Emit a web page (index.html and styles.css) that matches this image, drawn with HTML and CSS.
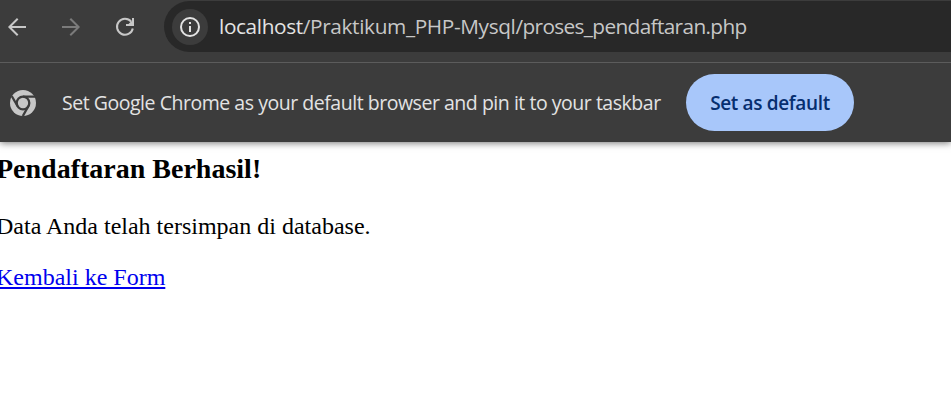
FILE: index.html
```html
<!DOCTYPE html>
<html lang="id">
<head>
<meta charset="utf-8">
<title>Pendaftaran</title>
<link rel="stylesheet" href="styles.css">
</head>
<body>
<header class="browser">
  <div class="toolbar">
    <svg class="nav" viewBox="0 0 164 54" fill="none" stroke="#c7c7c7" stroke-width="2">
      <path d="M26 27H9.5M17.7 18.7 9.4 27l8.3 8.3"/>
      <path stroke="#7b7b7b" d="M62 27h16.500M70.300 18.700l8.300 8.300-8.300 8.300"/>
      <path d="M131.200 21.700A8 8 0 1 0 132.800 28.500M133 18v7h-7"/>
      <path d="M131 21.500l-3.500 3.500h5v-4z" fill="#c7c7c7" stroke="none"/>
    </svg>
    <div class="address">
      <span class="site-info">
        <svg viewBox="0 0 22 22" fill="none" stroke="#e3e3e3" stroke-width="2"><circle cx="11" cy="11" r="9"/><path d="M11 10v6M11 6v2"/></svg>
      </span>
      <span class="url"><span class="host">localhost</span><span class="dir">/Praktikum_PHP-Mysql</span>/proses_pendaftaran.php</span>
    </div>
  </div>
  <div class="infobar">
    <svg class="chrome" viewBox="0 0 26 26"><circle cx="13" cy="13" r="13" fill="#c7c7c7"/><g fill="none" stroke="#3c3c3c" stroke-width="2.300"><circle cx="13" cy="13" r="6.300"/><path d="M13 6.700H25M7.500 16 1.700 6M18.500 16l-5.700 10"/></g></svg>
    <span class="message">Set Google Chrome as your default browser and pin it to your taskbar</span>
    <button class="default">Set as default</button>
  </div>
</header>
<main class="page">
  <h3>Pendaftaran Berhasil!</h3>
  <p>Data Anda telah tersimpan di database.</p>
  <a href="#">Kembali ke Form</a>
</main>
</body>
</html>
```
FILE: styles.css
```css
* { box-sizing: border-box; }
body { margin: 0; background: #fff; overflow: hidden; }
.browser {
  height: 142px;
  background: #3c3c3c;
  color: #e3e3e3;
  font-family: "Open Sans", sans-serif;
  box-shadow: 0 1px 7px rgba(0, 0, 0, .55);
}
.toolbar { display: flex; height: 63px; padding-top: 1px; border-bottom: 1px solid #5c5c5c; }
.nav { width: 164px; height: 54px; margin-top: -1px; flex: none; }
.address {
  display: flex;
  align-items: center;
  flex: 1;
  height: 51px;
  padding-left: 8px;
  border-radius: 26px 0 0 26px;
  background: #282828;
}
.site-info { display: grid; place-items: center; width: 36px; height: 36px; border-radius: 50%; background: #3c3c3c; }
.site-info svg { width: 22px; height: 22px; }
.url { margin: 0 0 2px 11px; color: #c7c7c7; font-size: 20.800px; letter-spacing: -.64px; white-space: nowrap; }
.host { color: #e3e3e3; letter-spacing: -.37px; }
.dir { letter-spacing: -.36px; }
.infobar { display: flex; align-items: center; height: 79px; padding-left: 10px; }
.chrome { width: 26px; height: 26px; flex: none; }
.message { width: 624px; margin-left: 26px; font-size: 19.500px; letter-spacing: -.47px; white-space: nowrap; }
.default {
  width: 168px;
  height: 57px;
  padding: 0;
  border: 0;
  border-radius: 29px;
  background: #a8c7fa;
  color: #062e6f;
  font: 600 19px "Open Sans", sans-serif;
  letter-spacing: -.35px;
}
.page { padding: 11px 0 0; margin-left: -4px; font: 24px/27px "Liberation Serif", serif; color: #000; }
.page h3 { margin: 0; font-size: 28px; line-height: 32px; }
.page p { margin: 28px 0 24px; }
.page a { color: #0000ee; }
```
